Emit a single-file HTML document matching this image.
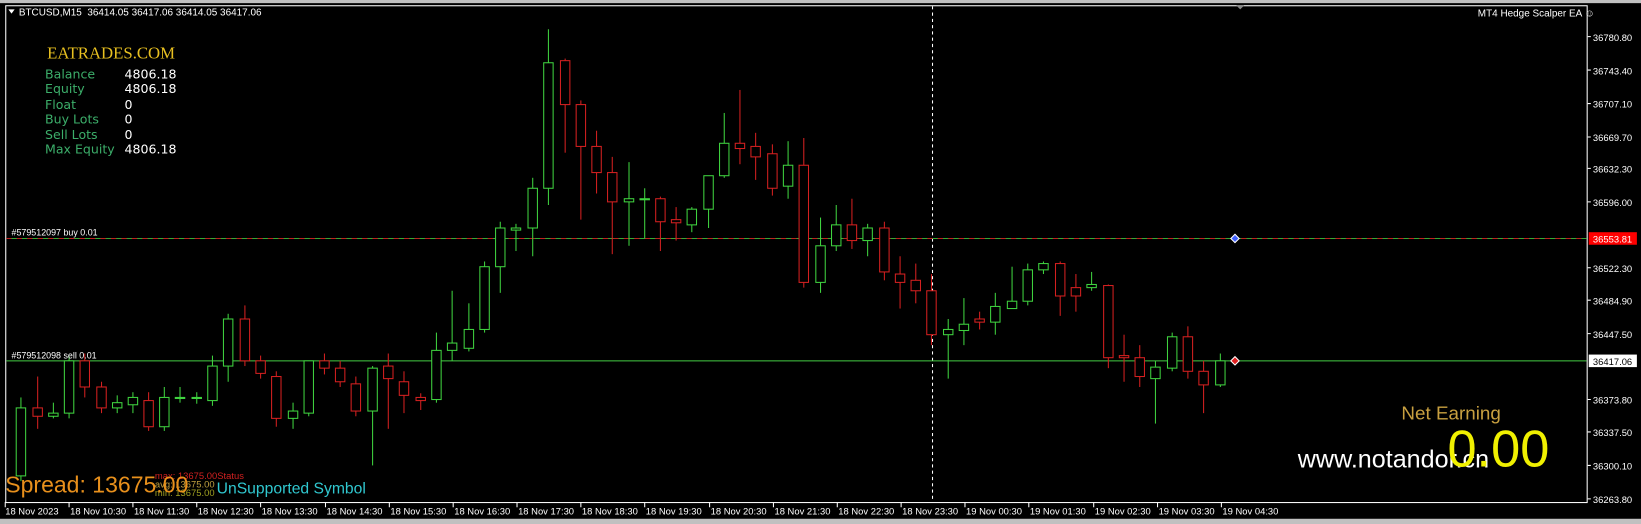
<!DOCTYPE html>
<html><head><meta charset="utf-8"><style>
html,body{margin:0;padding:0;background:#000;width:1641px;height:524px;overflow:hidden}
#w{position:absolute;left:0;top:0;width:1568px;height:501px;transform:scale(1.0466,1.0459);transform-origin:0 0;background:#000;font-family:"Liberation Sans",sans-serif}
.t{position:absolute;white-space:nowrap}
</style></head><body><div id="w">
<svg id="s" width="1568" height="501" style="position:absolute;left:0;top:0"></svg>
<div class="t" style="left:18px;top:7px;font-size:9.5px;color:#fff">BTCUSD,M15&nbsp; 36414.05 36417.06 36414.05 36417.06</div>
<div class="t" style="left:45px;top:43px;font-size:16px;color:#e8c020;font-family:'Liberation Serif',serif">EATRADES.COM</div>
<div class="t" style="left:43px;top:64px;font-size:12px;line-height:14.4px;color:#3cae6a;font-family:'DejaVu Sans',sans-serif">Balance<br>Equity<br>Float<br>Buy Lots<br>Sell Lots<br>Max Equity</div>
<div class="t" style="left:119px;top:64px;font-size:12px;line-height:14.4px;color:#fff;font-family:'DejaVu Sans',sans-serif">4806.18<br>4806.18<br>0<br>0<br>0<br>4806.18</div>
<div class="t" style="left:1412px;top:8px;font-size:9.5px;color:#fff">MT4 Hedge Scalper EA ☺</div>
<div class="t" style="left:11px;top:217px;font-size:8.5px;color:#fff">#579512097 buy 0.01</div>
<div class="t" style="left:11px;top:335px;font-size:8.5px;color:#fff">#579512098 sell 0.01</div>
<div class="t" style="left:1339px;top:385px;font-size:18px;color:#c8a040">Net Earning</div>
<div class="t" style="left:1240px;top:426px;font-size:24px;color:#fff">www.notandor.cn</div>
<div class="t" style="left:1383px;top:400px;font-size:50px;color:#f0f000">0.00</div>
<div class="t" style="left:148px;top:451px;font-size:9px;line-height:8px;color:#d02020">max: 13675.00Status<br><span style="color:#c0a040">avg: 13675.00</span><br><span style="color:#a0a020">min: 13675.00</span></div>
<div class="t" style="left:5px;top:451px;font-size:22px;color:#e8901c">Spread: 13675.00</div>
<div class="t" style="left:207px;top:459px;font-size:15px;color:#30c8d0">UnSupported Symbol</div>
</div>
<script>
var s=document.getElementById('s'),h='';
h+='<rect x="0" y="0" width="1568" height="3" fill="#c0c0c0"/>';
h+='<rect x="0" y="496" width="1568" height="5" fill="#c0c0c0"/>';
h+='<rect x="5.5" y="5.5" width="1511" height="475" fill="none" stroke="#fff"/>';
h+='<path d="M8 9l6 0l-3 4z" fill="#fff"/>';
h+='<path d="M1181 5l8 0l-4 4z" fill="#888"/>';
h+='<line x1="891" y1="6" x2="891" y2="480" stroke="#fff" stroke-dasharray="3,3"/>';
h+='<line x1="6" y1="228" x2="1516" y2="228" stroke="#3a3" />';
h+='<line x1="6" y1="228" x2="1516" y2="228" stroke="#c02020" stroke-dasharray="5,5"/>';
h+='<line x1="6" y1="345" x2="1516" y2="345" stroke="#4c4"/>';
var c=[[20,390,455,'g',380,460],[36,390,398,'r',360,410],[51,395,398,'g',385,400],[66,345,395,'g',340,400],[81,345,370,'r',338,380],[97,370,390,'r',365,395],[112,385,390,'g',378,395],[127,380,387,'g',375,395],[142,383,408,'r',375,412],[157,380,408,'g',370,412],[172,380,381,'g',370,385],[188,380,381,'g',375,386],[203,350,383,'g',340,388],[218,305,350,'g',300,365],[234,305,345,'r',292,350],[249,345,357,'r',340,362],[264,360,400,'r',355,408],[280,393,400,'g',385,410],[295,345,395,'g',345,398],[310,345,352,'r',338,358],[325,352,365,'r',345,370],[340,367,393,'r',360,398],[356,352,393,'g',350,445],[371,350,362,'r',338,410],[386,365,378,'r',355,395],[402,380,383,'r',376,392],[417,335,382,'g',318,385],[432,328,335,'g',278,345],[448,315,333,'g',290,336],[463,255,315,'g',250,318],[478,218,255,'g',212,280],[493,218,220,'g',214,240],[509,180,218,'g',170,245],[524,60,180,'g',28,196],[540,58,100,'r',56,146],[555,100,140,'r',96,210],[570,140,165,'r',125,185],[585,165,193,'r',150,243],[601,190,193,'g',155,235],[616,190,191,'g',180,228],[631,190,212,'r',188,240],[646,210,213,'r',198,230],[661,200,215,'g',198,222],[677,168,200,'g',168,218],[692,137,168,'g',108,170],[707,137,142,'r',86,157],[722,140,150,'r',127,172],[738,147,180,'r',138,187],[753,158,178,'g',135,190],[768,158,270,'r',132,275],[784,235,270,'g',208,280],[799,215,235,'g',196,240],[814,215,230,'r',190,238],[829,218,230,'g',214,245],[845,218,260,'r',212,268],[860,262,270,'r',245,295],[875,268,278,'r',252,290],[890,278,320,'r',262,330],[906,315,320,'g',305,362],[921,310,316,'g',285,330],[936,305,308,'r',298,315],[951,293,308,'g',280,320],[967,288,295,'g',255,295],[982,258,288,'g',252,292],[997,252,258,'g',250,262],[1013,252,283,'r',250,302],[1028,275,283,'r',262,298],[1043,272,275,'g',260,278],[1059,273,342,'r',272,352],[1074,340,342,'r',320,365],[1089,342,360,'r',330,370],[1104,351,362,'g',345,405],[1120,322,352,'g',318,355],[1135,322,355,'r',312,362],[1150,355,368,'r',345,395],[1166,345,368,'g',338,370]];
c.forEach(function(k){var col=k[3]=='g'?'#3fd23f':'#d42020';var hgt=Math.max(k[2]-k[1],1);
h+='<line x1="'+k[0]+'" y1="'+k[4]+'" x2="'+k[0]+'" y2="'+k[5]+'" stroke="'+col+'"/>';
h+='<rect x="'+(k[0]-4.5)+'" y="'+k[1]+'" width="9" height="'+hgt+'" fill="#000" stroke="'+col+'"/>';});
h+='<path d="M1180 224l4 4l-4 4l-4-4z" fill="#4060ff" stroke="#fff" stroke-width="1"/>';
h+='<path d="M1180 341l4 4l-4 4l-4-4z" fill="#e02020" stroke="#fff" stroke-width="1"/>';
var F=' font-size="9" font-family="Liberation Sans,sans-serif"';
var p=[[35,'36780.80'],[67,'36743.40'],[99,'36707.10'],[131,'36669.70'],[161,'36632.30'],[193,'36596.00'],[256,'36522.30'],[287,'36484.90'],[319,'36447.50'],[382,'36373.80'],[413,'36337.50'],[445,'36300.10'],[477,'36263.80']];
p.forEach(function(q){h+='<line x1="1517" y1="'+q[0]+'" x2="1520" y2="'+q[0]+'" stroke="#fff"/><text x="1522" y="'+(q[0]+4)+'" fill="#fff"'+F+'>'+q[1]+'</text>';});
h+='<rect x="1518" y="222" width="46" height="12" fill="#ff0000"/><text x="1522" y="232" fill="#fff"'+F+'>36553.81</text>';
h+='<rect x="1518" y="339" width="46" height="12" fill="#fff"/><text x="1522" y="349" fill="#000"'+F+'>36417.06</text>';
var lab=['18 Nov 10:30','18 Nov 11:30','18 Nov 12:30','18 Nov 13:30','18 Nov 14:30','18 Nov 15:30','18 Nov 16:30','18 Nov 17:30','18 Nov 18:30','18 Nov 19:30','18 Nov 20:30','18 Nov 21:30','18 Nov 22:30','18 Nov 23:30','19 Nov 00:30','19 Nov 01:30','19 Nov 02:30','19 Nov 03:30','19 Nov 04:30'];
h+='<line x1="5" y1="480" x2="5" y2="485" stroke="#fff"/><text x="5" y="492" fill="#fff"'+F+'>18 Nov 2023</text>';
lab.forEach(function(l,i){var x=Math.round(66+i*61.16);h+='<line x1="'+x+'" y1="480" x2="'+x+'" y2="485" stroke="#fff"/><text x="'+(x+1)+'" y="492" fill="#fff"'+F+'>'+l+'</text>';});
s.innerHTML=h;
</script>
</body></html>
